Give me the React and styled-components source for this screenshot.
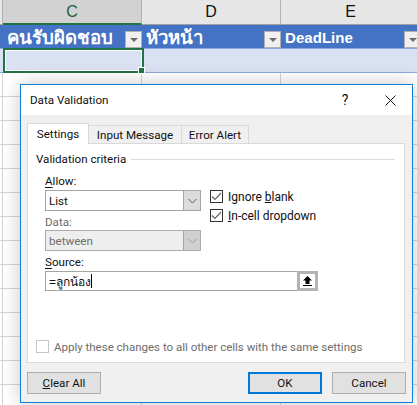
import React from "react";
import styled, { createGlobalStyle } from "styled-components";

const Global = createGlobalStyle`
  html, body { margin: 0; padding: 0; background: #fff; }
  #root { width: 417px; height: 405px; overflow: hidden; position: relative; }
`;
const Sheet = styled.div`
  width: 417px; height: 405px; position: relative; overflow: hidden; background: #fff;
  font-family: Roboto, "Noto Sans", sans-serif;
`;
const Row = styled.div`
  display: grid; grid-template-columns: 3px 139px 139px 140px; height: ${p => p.$h}px;
  box-sizing: border-box;
`;
const ColHead = styled.div`
  background: ${p => p.$sel ? "#d2d2d2" : "#e6e6e6"};
  border-right: 1px solid #b1b1b1;
  border-bottom: ${p => p.$sel ? "2px solid #217346" : "1px solid #a0a0a0"};
  box-sizing: border-box;
  display: flex; align-items: center; justify-content: center;
  font: 16px "Liberation Sans", sans-serif;
  color: ${p => p.$sel ? "#1d5f3a" : "#111"};
`;
const HeadCell = styled.div`
  background: #4472c4; color: #fff; font: bold 18.6px "DejaVu Sans", "Noto Sans", sans-serif;
  display: flex; align-items: center; justify-content: space-between; padding: 1px 0 0 4px;
  border-bottom: 1px solid #8eaadb; box-sizing: border-box; white-space: nowrap; overflow: hidden;
`;
const LatinHead = styled.span` font: bold 15px "Liberation Sans", sans-serif; letter-spacing: 0.05px; `;
const Filter = styled.span`
  width: 17px; height: 17px; box-sizing: border-box; background: #f0f0f0; border: 1px solid #b0b0b0;
  display: flex; align-items: center; justify-content: center; flex: none; align-self: flex-end;
  &::after { content: ""; border: 4px solid transparent; border-top: 4px solid #6a6a6a; border-bottom: 0; }
`;
const BandCell = styled.div`
  background: #d9e1f2; border-bottom: 1px solid #8eaadb; box-sizing: border-box;
`;
const Plain = styled.div`
  border-right: 1px solid #d4d4d4; border-bottom: 1px solid #d4d4d4; box-sizing: border-box;
`;
const Selection = styled.div`
  position: absolute; left: 3px; top: 48px; width: 141px; height: 25px; box-sizing: border-box;
  border: 2px solid #217346; box-shadow: inset 0 0 0 1px #fff;
  &::after { content: ""; position: absolute; right: -3px; bottom: -3px; width: 5px; height: 5px;
    background: #217346; border: 1px solid #fff; }
`;
const Dialog = styled.div`
  position: absolute; left: 20px; top: 84px; width: 393px; height: 319px; box-sizing: border-box;
  border: 1px solid #0f7fd6; background: #f0f0f0; box-shadow: 0 0 18px rgba(0,0,0,.22);
  display: flex; flex-direction: column; color: #111; font-size: 11.6px;
`;
const TitleBar = styled.div`
  height: 30px; flex: none; background: #fff; display: flex; align-items: center; padding-left: 9px;
`;
const TitleText = styled.span` flex: 1; `;
const Help = styled.span` width: 16px; font-size: 14px; text-align: center; margin-right: 32px; `;
const Close = styled.svg` width: 11px; height: 11px; margin-right: 16px; `;
const Body = styled.div`
  flex: 1; padding: 8px 7px 0 6px; display: flex; flex-direction: column;
`;
const Tabs = styled.div` display: flex; height: 21px; align-items: flex-end; position: relative; z-index: 1; margin-bottom: -1px; `;
const Tab = styled.div`
  box-sizing: border-box; height: ${p => p.$on ? 21 : 19}px; width: ${p => p.$w}px;
  background: ${p => p.$on ? "#fff" : "#f0f0f0"};
  border: 1px solid #d9d9d9; border-left-width: ${p => p.$on ? 1 : 0}px;
  border-bottom: ${p => p.$on ? "0" : "1px solid #d9d9d9"};
  display: flex; align-items: center; justify-content: center;
`;
const Panel = styled.div`
  height: 220px; box-sizing: border-box; background: #fff; border: 1px solid #d9d9d9; padding: 7px 9px 0 8px;
  display: flex; flex-direction: column;
`;
const Legend = styled.div`
  display: flex; align-items: center; gap: 5px; height: 16px;
  &::after { content: ""; flex: 1; height: 1px; background: #dcdcdc; }
`;
const Criteria = styled.div` display: flex; padding-left: 9px; margin-top: 4px; gap: 9px; `;
const Left = styled.div` width: 156px; display: flex; flex-direction: column; `;
const Right = styled.div` display: flex; flex-direction: column; gap: 4px; padding-top: 18px; font-size: 12px; `;
const Label = styled.label`
  display: block; height: ${p => p.$h || 19}px; line-height: ${p => p.$lh}px; color: ${p => p.$off ? "#6d6d6d" : "#111"};
  & u { text-underline-offset: 2px; }
`;
const Select = styled.div`
  height: 21px; box-sizing: border-box; border: 1px solid ${p => p.$off ? "#acacac" : "#a5a5a5"};
  background: ${p => p.$off ? "#eeeeee" : "#fff"}; color: ${p => p.$off ? "#6d6d6d" : "#111"};
  display: flex; align-items: center; padding-left: 3px;
`;
const SelectText = styled.span` flex: 1; `;
const Caret = styled.span`
  width: 17px; height: 19px; background: ${p => p.$off ? "#d0d0d0" : "#dcdcdc"}; border-left: 1px solid #a5a5a5;
  display: flex; align-items: center; justify-content: center; box-sizing: border-box;
`;
const CheckRow = styled.div` display: flex; align-items: center; gap: 5px; height: 15px; `;
const Box = styled.span`
  width: 13px; height: 13px; box-sizing: border-box; border: 1px solid ${p => p.$off ? "#c6c6c6" : "#333"};
  background: #fff; display: flex; align-items: center; justify-content: center; flex: none;
`;
const SourceWrap = styled.div` padding-left: 9px; `;
const SourceBox = styled.div`
  width: 273px; height: 20px; box-sizing: border-box; border: 1px solid #a5a5a5; display: flex; align-items: center;
  padding-left: 3px; background: #fff; font-family: "Liberation Sans", sans-serif; font-size: 12px;
`;
const SourceText = styled.span` flex: 1; display: flex; align-items: center; `;
const Cursor = styled.i` display: inline-block; width: 1px; height: 14px; background: #000; `;
const RefBtn = styled.span`
  width: 21px; height: 20px; margin-right: -1px; box-sizing: border-box; border: 3px solid #b4b4b4; background: #fff;
  display: flex; align-items: center; justify-content: center;
`;
const Apply = styled.div`
  display: flex; align-items: center; gap: 5px; margin: auto 0 8px 0; color: #6d6d6d; height: 15px; font-size: 11.5px;
`;
const Footer = styled.div` display: flex; margin: 9px -1px 0 0; gap: 10px; `;
const Btn = styled.div`
  width: 74px; height: 22px; box-sizing: border-box; background: #e1e1e1; border: ${p => p.$def ? "2px solid #0078d7" : "1px solid #adadad"};
  display: flex; align-items: center; justify-content: center;
  ${p => p.$push && "margin-right: auto;"}
`;

const CaretIcon = ({ c }) => (
  <svg width="9" height="6" viewBox="0 0 9 6"><path d="M.5 1 4.5 5 8.5 1" fill="none" stroke={c} /></svg>
);
const Tick = ({ c = "#666" }) => (
  <svg width="11" height="9" viewBox="0 0 11 9"><path d="M1 4.5 4 7.5 10 1" fill="none" stroke={c} strokeWidth="1.2" /></svg>
);

export default function App() {
  return (
    <Sheet>
      <Global />
      <Row $h={25}>
        <ColHead />
        <ColHead $sel>C</ColHead>
        <ColHead>D</ColHead>
        <ColHead>E</ColHead>
      </Row>
      <Row $h={24}>
        <HeadCell />
        <HeadCell>คนรับผิดชอบ<Filter /></HeadCell>
        <HeadCell>หัวหน้า<Filter /></HeadCell>
        <HeadCell><LatinHead>DeadLine</LatinHead><Filter /></HeadCell>
      </Row>
      <Row $h={24}>
        <BandCell /><BandCell /><BandCell /><BandCell />
      </Row>
      {Array.from({ length: 17 }).map((_, i) => (
        <Row $h={24} key={i}><Plain /><Plain /><Plain /><Plain /></Row>
      ))}
      <Selection />
      <Dialog>
        <TitleBar>
          <TitleText>Data Validation</TitleText>
          <Help>?</Help>
          <Close viewBox="0 0 11 11"><path d="M.5.5 10.5 10.5M10.5.5.5 10.5" stroke="#111" fill="none" /></Close>
        </TitleBar>
        <Body>
          <Tabs>
            <Tab $on $w={62}>Settings</Tab>
            <Tab $w={93}>Input Message</Tab>
            <Tab $w={67}>Error Alert</Tab>
          </Tabs>
          <Panel>
            <Legend>Validation criteria</Legend>
            <Criteria>
              <Left>
                <Label $lh={21}><u>A</u>llow:</Label>
                <Select><SelectText>List</SelectText><Caret><CaretIcon c="#555" /></Caret></Select>
                <Label $off $lh={23}>Data:</Label>
                <Select $off><SelectText>between</SelectText><Caret $off><CaretIcon c="#a0a0a0" /></Caret></Select>
              </Left>
              <Right>
                <CheckRow><Box><Tick /></Box><span>Ignore <u>b</u>lank</span></CheckRow>
                <CheckRow><Box><Tick /></Box><span><u>I</u>n-cell dropdown</span></CheckRow>
              </Right>
            </Criteria>
            <SourceWrap>
              <Label $h={20} $lh={23}><u>S</u>ource:</Label>
              <SourceBox>
                <SourceText>=ลูกน้อง<Cursor /></SourceText>
                <RefBtn>
                  <svg width="9" height="10" viewBox="0 0 9 10"><path d="M4.5 0 9 4.5H6.5V8H2.5V4.5H0Z M0 9H9V10H0Z" fill="#000" /></svg>
                </RefBtn>
              </SourceBox>
            </SourceWrap>
            <Apply><Box $off />Apply these changes to all other cells with the same settings</Apply>
          </Panel>
          <Footer>
            <Btn $push><span><u>C</u>lear All</span></Btn>
            <Btn $def>OK</Btn>
            <Btn>Cancel</Btn>
          </Footer>
        </Body>
      </Dialog>
    </Sheet>
  );
}
